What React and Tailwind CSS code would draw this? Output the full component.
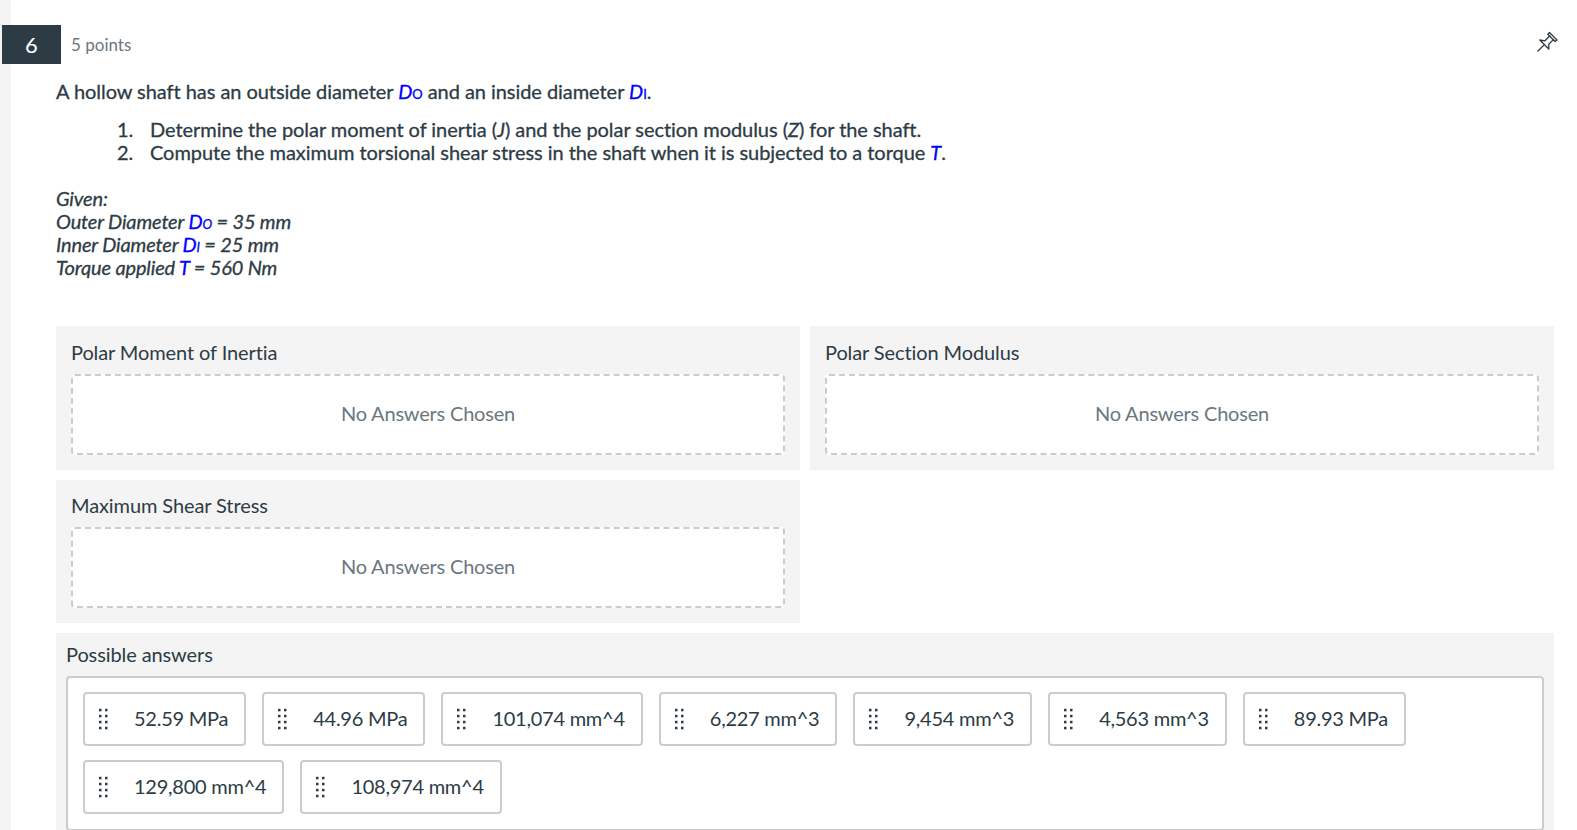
const Blue = ({ children }) => <span className="text-[#0000ff]">{children}</span>;
const Sub = ({ children }) => <span className="text-[#0000ff] text-[13px] leading-[0]">{children}</span>;

function Grip() {
  return (
    <svg width="12" height="22" viewBox="0 0 12 22" className="shrink-0 text-[#2d3b45]" fill="currentColor">
      {[2, 8, 14, 20].map((y) => (
        <g key={y}>
          <rect x="2" y={y - 1.2} width="2.5" height="2.5" />
          <rect x="8" y={y - 1.2} width="2.5" height="2.5" />
        </g>
      ))}
    </svg>
  );
}

function Pin() {
  return (
    <svg width="22" height="22" viewBox="0 0 22 22" fill="none" stroke="#2d3b45" strokeWidth="1.3" strokeLinejoin="round" strokeLinecap="round">
      <path d="M1 20 L6.5 14.5" />
      <path d="M12.5 1.5 L20 9 L18 10.5 L10.8 3.2 Z" />
      <path d="M12.8 4.8 L8 9.8 L2.8 9 L11.8 18 L11.8 13.2 L16.6 8.4" />
    </svg>
  );
}

function Zone({ label, compact }) {
  return (
    <div className={compact ? "bg-[#f4f4f4] h-[143px] px-[15px] pb-[15px] flex flex-col" : "bg-[#f4f4f4] h-[144px] px-[15px] pb-[15px] flex flex-col"}>
      <div className={compact ? "h-[47px] pt-[10px] text-[20px] leading-[30px] tracking-[-0.1px]" : "h-[48px] pt-[10.5px] text-[20px] leading-[30px] tracking-[-0.1px]"}>{label}</div>
      <div className="h-[81px] pb-[3px] bg-white border-2 border-dashed border-[#c7cdd1] rounded-[4px] flex items-center justify-center text-[20px] tracking-[-0.2px] text-[#6b7780]">
        No Answers Chosen
      </div>
    </div>
  );
}

function Item({ text }) {
  return (
    <div className="h-[54px] bg-white border-2 border-[#c7cdd1] rounded-[4px] pl-[12px] pr-[16px] flex items-center">
      <Grip />
      <span className="ml-[25px] pb-[2px] text-[20px] tracking-[-0.25px]">{text}</span>
    </div>
  );
}

export default function App() {
  return (
    <div className="h-[830px] overflow-hidden flex bg-white text-[#2d3b45]" style={{ fontFamily: "Lato, 'Noto Sans', sans-serif" }}>
      <div className="w-[11px] shrink-0 bg-[#f3f3f3]" />
      <main className="flex-1 min-w-0 pt-[25px]">
        <header className="flex items-center h-[39px] pr-[18px]">
          <div className="-ml-[9px] w-[59px] h-[39px] bg-[#2d3b45] text-white flex items-center justify-center text-[22px]">6</div>
          <div className="ml-[10px] text-[17px] text-[#6b7780]">5 points</div>
          <div className="ml-auto -mt-[5px]"><Pin /></div>
        </header>
        <div className="pl-[45px] pr-[23px]">
          <div className="text-[20px] leading-[23px] [-webkit-text-stroke:0.3px]">
            <p className="mt-[16px] tracking-[-0.05px]">A hollow shaft has an outside diameter <Blue><i>D</i></Blue><Sub>O</Sub> and an inside diameter <Blue><i>D</i></Blue><Sub>I</Sub>.</p>
            <ol className="mt-[15px] pl-[61px] tracking-[-0.05px]">
              <li className="flex"><span className="w-[33px] shrink-0">1.</span><span>Determine the polar moment of inertia (<i>J</i>) and the polar section modulus (<i>Z</i>) for the shaft.</span></li>
              <li className="flex"><span className="w-[33px] shrink-0">2.</span><span>Compute the maximum torsional shear stress in the shaft when it is subjected to a torque <Blue><i>T</i></Blue>.</span></li>
            </ol>
            <p className="mt-[23px] italic tracking-[-0.15px]">Given:<br />Outer Diameter <Blue>D</Blue><Sub>O</Sub> = 35 mm<br />Inner Diameter <Blue>D</Blue><Sub>I</Sub> = 25 mm<br />Torque applied <Blue>T</Blue> = 560 Nm</p>
          </div>
          <div className="mt-[47px] grid grid-cols-2 gap-x-[10px] gap-y-[10px]">
            <Zone label="Polar Moment of Inertia" />
            <Zone label="Polar Section Modulus" />
            <Zone label="Maximum Shear Stress" compact />
          </div>
          <section className="mt-[10px] bg-[#f4f4f4] px-[10px]">
            <div className="h-[43px] pt-[6px] text-[20px] leading-[30px] tracking-[-0.1px]">Possible answers</div>
            <div className="bg-white border-2 border-[#c7cdd1] rounded-[4px] px-[15px] pt-[14px] pb-[15px] flex flex-wrap gap-x-[16px] gap-y-[14px]">
              {["52.59 MPa", "44.96 MPa", "101,074 mm^4", "6,227 mm^3", "9,454 mm^3", "4,563 mm^3", "89.93 MPa", "129,800 mm^4", "108,974 mm^4"].map((t) => (
                <Item key={t} text={t} />
              ))}
            </div>
          </section>
        </div>
      </main>
    </div>
  );
}
